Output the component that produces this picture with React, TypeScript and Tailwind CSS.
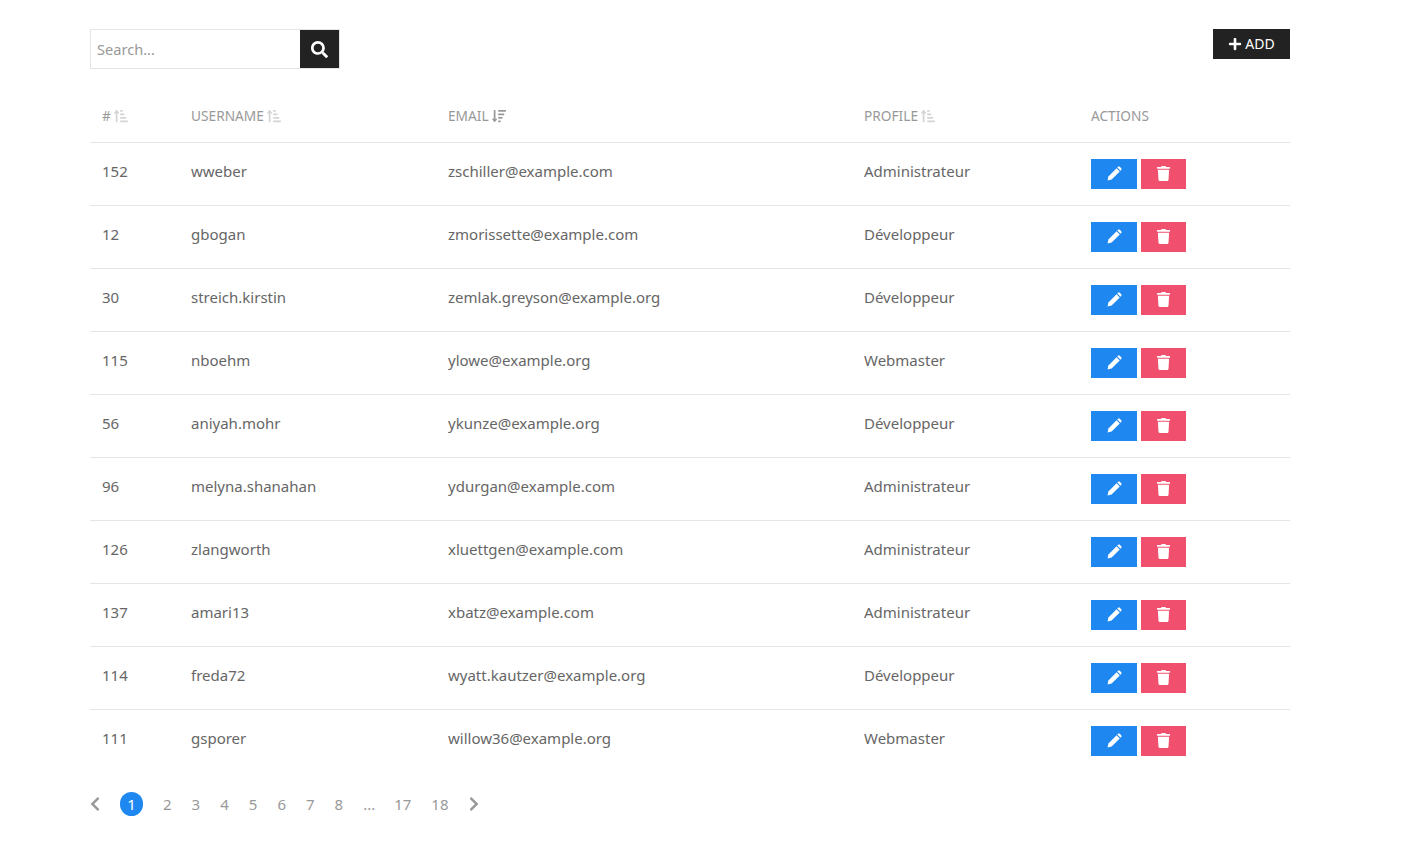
import { FaChevronLeft, FaChevronRight, FaPlus, FaSearch, FaSortAmountDown, FaSortAmountUpAlt, FaTrash } from 'react-icons/fa';

const users = [
  { id: 152, username: 'wweber', email: 'zschiller@example.com', profile: 'Administrateur' },
  { id: 12, username: 'gbogan', email: 'zmorissette@example.com', profile: 'Développeur' },
  { id: 30, username: 'streich.kirstin', email: 'zemlak.greyson@example.org', profile: 'Développeur' },
  { id: 115, username: 'nboehm', email: 'ylowe@example.org', profile: 'Webmaster' },
  { id: 56, username: 'aniyah.mohr', email: 'ykunze@example.org', profile: 'Développeur' },
  { id: 96, username: 'melyna.shanahan', email: 'ydurgan@example.com', profile: 'Administrateur' },
  { id: 126, username: 'zlangworth', email: 'xluettgen@example.com', profile: 'Administrateur' },
  { id: 137, username: 'amari13', email: 'xbatz@example.com', profile: 'Administrateur' },
  { id: 114, username: 'freda72', email: 'wyatt.kautzer@example.org', profile: 'Développeur' },
  { id: 111, username: 'gsporer', email: 'willow36@example.org', profile: 'Webmaster' },
];

const pages = ['2', '3', '4', '5', '6', '7', '8', '...', '17', '18'];

function PencilIcon() {
  return (
    <svg viewBox="0 0 16 16" className="h-[15px] w-[15px]" fill="currentColor">
      <path d="M.6 15.4l.9-4.3 8.7-8.7 3.4 3.4-8.7 8.7z" />
      <path d="M11 1.6l.7-.7c.6-.6 1.4-.6 2 0l1.4 1.4c.6.6.6 1.4 0 2l-.7.7z" />
    </svg>
  );
}

function SortHead({ label, active }: { label: string; active?: boolean }) {
  return (
    <span className="flex items-center gap-[3px]">
      {label}
      {active ? (
        <FaSortAmountDown className="text-[14px] text-[#999]" />
      ) : (
        <FaSortAmountUpAlt className="text-[14px] text-[#d4d4d4]" />
      )}
    </span>
  );
}

export default function App() {
  return (
    <div className="min-h-[863px] bg-white pl-[90px] pt-[29px] text-[15px] text-[#666]" style={{ fontFamily: '"Noto Sans", "Open Sans", sans-serif' }}>
      <div className="w-[1200px]">
        {/* search + add */}
        <div className="flex items-start justify-between">
          <div className="flex h-[40px] w-[250px] border border-[#e5e5e5]">
            <input
              placeholder="Search..."
              className="w-[209px] px-[6px] pt-[1px] text-[14.6px] text-[#666] outline-none placeholder:text-[#999]"
            />
            <button type="button" className="flex w-[39px] items-center justify-center bg-[#222] text-white">
              <FaSearch className="text-[17px]" />
            </button>
          </div>
          <button type="button" className="flex h-[30px] w-[77px] items-center justify-center gap-[3px] bg-[#222] pb-[1px] text-[14px] text-white">
            <FaPlus className="text-[14px]" />
            ADD
          </button>
        </div>

        {/* table */}
        <table className="mt-[34px] w-full table-fixed border-collapse">
          <thead>
            <tr className="h-[39px] border-b border-[#e5e5e5] text-left text-[13.7px] text-[#999]">
              <th className="w-[89px] px-[12px] pb-[12px] font-normal"><SortHead label="#" /></th>
              <th className="w-[257px] px-[12px] pb-[12px] font-normal"><SortHead label="USERNAME" /></th>
              <th className="w-[416px] px-[12px] pb-[12px] font-normal"><SortHead label="EMAIL" active /></th>
              <th className="w-[227px] px-[12px] pb-[12px] font-normal"><SortHead label="PROFILE" /></th>
              <th className="px-[12px] pb-[12px] font-normal">ACTIONS</th>
            </tr>
          </thead>
          <tbody>
            {users.map((user, i) => (
              <tr key={user.id} className={i < users.length - 1 ? 'h-[63px] border-b border-[#e5e5e5]' : 'h-[63px]'}>
                <td className="px-[12px] pb-[5px]">{user.id}</td>
                <td className="px-[12px] pb-[5px]">{user.username}</td>
                <td className="px-[12px] pb-[5px]">{user.email}</td>
                <td className="px-[12px] pb-[5px]">{user.profile}</td>
                <td className="px-[12px]">
                  <div className="flex gap-[4px]">
                    <button type="button" className="flex h-[30px] w-[46px] items-center justify-center bg-[#1e87f0] text-white">
                      <PencilIcon />
                    </button>
                    <button type="button" className="flex h-[30px] w-[45px] items-center justify-center bg-[#f0506e] text-white">
                      <FaTrash className="text-[15px]" />
                    </button>
                  </div>
                </td>
              </tr>
            ))}
          </tbody>
        </table>

        {/* pagination */}
        <div className="mt-[20px] flex h-[24px] items-center text-[#999]">
          <FaChevronLeft className="-ml-[3px] text-[16px]" />
          <span className="ml-[17px] flex h-[24px] w-[23px] items-center justify-center rounded-full bg-[#1e87f0] text-white">1</span>
          <div className="ml-[20px] flex items-center gap-[20px]">
            {pages.map((p) => (
              <span key={p} className={p === '...' ? 'w-[11px]' : ''}>{p}</span>
            ))}
          </div>
          <FaChevronRight className="ml-[17px] text-[16px]" />
        </div>
      </div>
    </div>
  );
}
